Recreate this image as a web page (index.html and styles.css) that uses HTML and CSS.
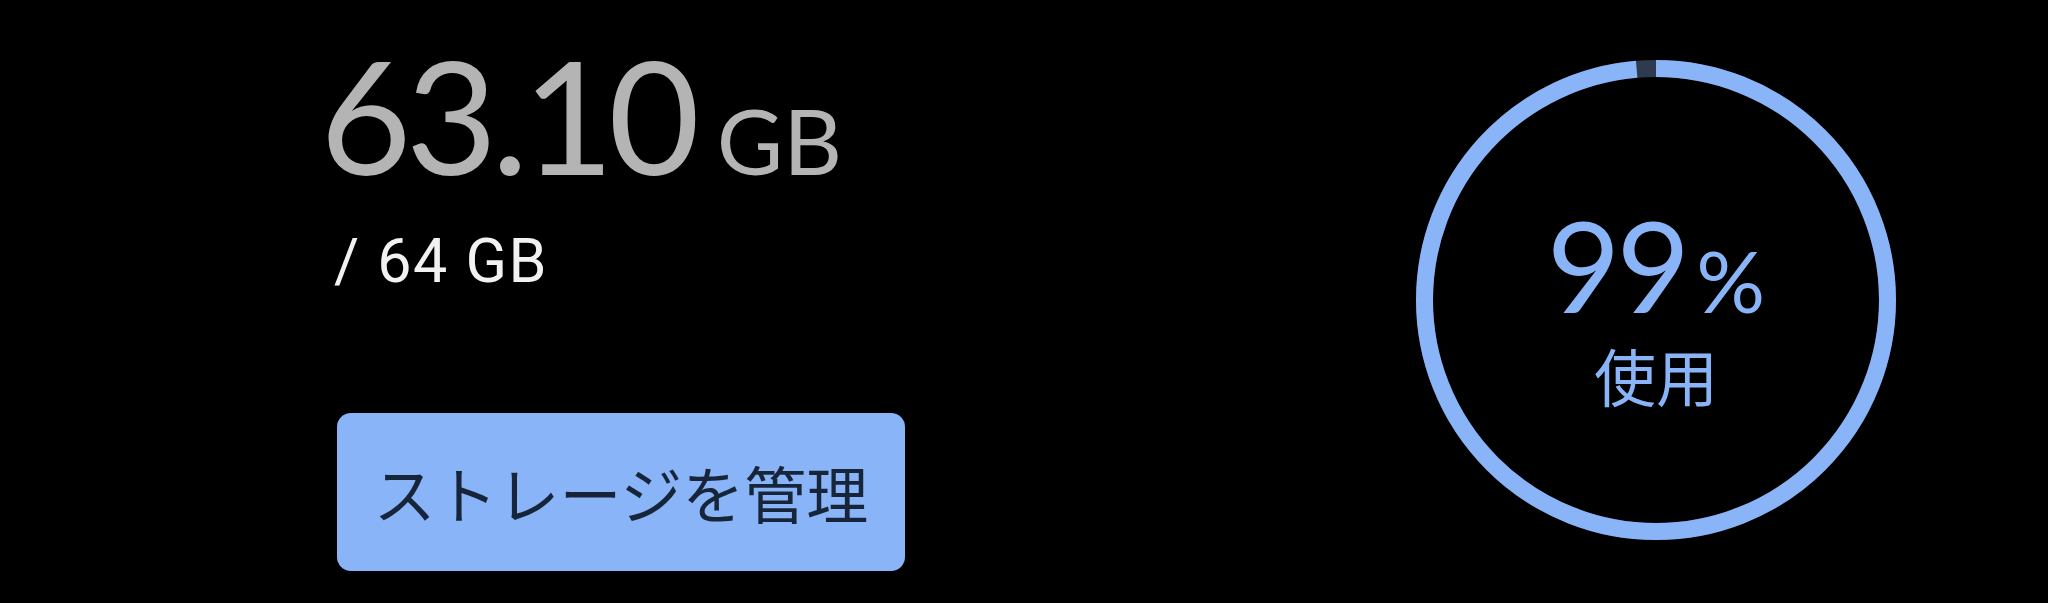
FILE: index.html
```html
<!DOCTYPE html>
<html lang="ja">
<head>
<meta charset="utf-8">
<title>ストレージ</title>
<link rel="stylesheet" href="styles.css">
</head>
<body>
<main class="storage">
  <section class="summary">
    <div class="used"><span class="used-num">63.10</span><span class="used-unit">GB</span></div>
    <div class="total">/ 64 GB</div>
    <button class="manage">ストレージを管理</button>
  </section>
  <section class="meter">
    <svg class="ring" viewBox="0 0 480 480" width="480" height="480" aria-hidden="true">
      <circle class="ring-track" cx="240" cy="240" r="231.5"></circle>
      <circle class="ring-fill" cx="240" cy="240" r="231.5" transform="rotate(-90 240 240)"></circle>
    </svg>
    <div class="meter-text">
      <div class="pct"><span class="pct-num">99</span><span class="pct-sign">%</span></div>
      <div class="pct-label">使用</div>
    </div>
  </section>
</main>
</body>
</html>
```
FILE: styles.css
```css
html, body {
  margin: 0;
  padding: 0;
  background: #000;
}
body {
  width: 2048px;
  height: 603px;
  overflow: hidden;
  font-family: "Lato", "Noto Sans CJK JP", sans-serif;
}
.storage {
  display: flex;
  justify-content: space-between;
  align-items: flex-start;
  height: 603px;
  padding: 0 152px 0 320px;
  box-sizing: border-box;
}
.summary {
  display: flex;
  flex-direction: column;
  align-items: flex-start;
  padding-top: 35px;
}
.used {
  color: #b4b4b4;
  line-height: 1;
  white-space: nowrap;
}
.used-num {
  font-size: 158px;
  letter-spacing: -6px;
}
.used-unit {
  font-size: 91px;
  margin-left: 23px;
}
.total {
  margin-top: 38px;
  margin-left: 14px;
  font-family: "Roboto", sans-serif;
  font-size: 61px;
  letter-spacing: 1.5px;
  line-height: 1;
  color: #f2f2f2;
}
.manage {
  margin-top: 121px;
  margin-left: 17px;
  width: 568px;
  height: 158px;
  border: 0;
  border-radius: 14px;
  background: #8ab4f8;
  color: #17253a;
  font-family: "Noto Sans CJK JP", sans-serif;
  font-size: 62px;
  line-height: 1;
  padding: 0;
  display: flex;
  align-items: center;
  justify-content: center;
}
.meter {
  position: relative;
  width: 480px;
  height: 480px;
  margin-top: 60px;
}
.ring {
  position: absolute;
  left: 0;
  top: 0;
}
.ring-track {
  fill: none;
  stroke: #2e3b4e;
  stroke-width: 17;
}
.ring-fill {
  fill: none;
  stroke: #8ab4f8;
  stroke-width: 17;
  stroke-dasharray: 1434.6 1454.6;
}
.meter-text {
  position: relative;
  display: flex;
  flex-direction: column;
  align-items: center;
  padding-top: 141px;
  color: #8ab4f8;
}
.pct {
  line-height: 1;
  white-space: nowrap;
}
.pct-num {
  font-size: 127px;
  letter-spacing: -4px;
}
.pct-sign {
  font-size: 86px;
  margin-left: 10px;
}
.pct-label {
  margin-top: 16px;
  font-family: "Noto Sans CJK JP", sans-serif;
  font-size: 62px;
  line-height: 1;
}
```
